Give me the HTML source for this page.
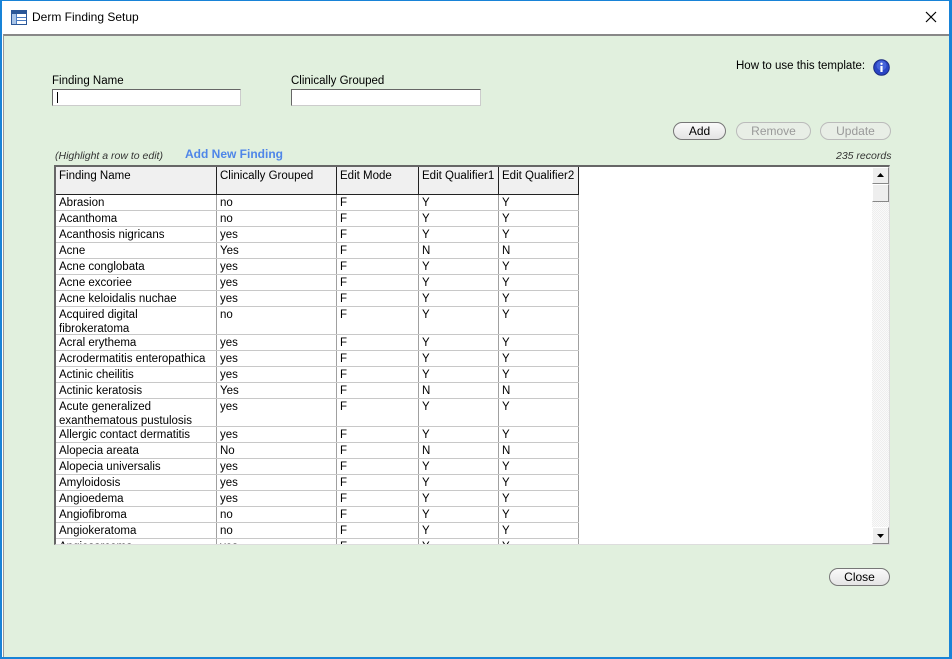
<!DOCTYPE html>
<html><head><meta charset="utf-8"><style>
*{margin:0;padding:0;box-sizing:border-box}
body{width:952px;height:659px;overflow:hidden;background:#fff;font-family:"Liberation Sans",Arial,sans-serif;font-size:11.5px;color:#000;position:relative}
.win{position:absolute;left:0;top:0;width:952px;height:659px;border:1px solid #1883d7;border-width:1px 3px 2px 2px;background:#fff}
.title{position:absolute;left:0;top:0;width:100%;height:33px;background:#fff}
.title span{position:absolute;left:30px;top:9px;font-size:12px;color:#000}
.content{position:absolute;left:1px;top:33px;right:0;bottom:0;background:#e1f0de;border-top:2px solid #888;border-left:1px solid #999}
.a{position:absolute;white-space:nowrap}
.inp{position:absolute;height:17px;background:#fff;border:1px solid #666;border-right-color:#ccc;border-bottom-color:#ccc}
.btn{position:absolute;height:18px;border-radius:9px;border:1px solid #777;background:linear-gradient(#fafafa,#e4e4e4);text-align:center;line-height:16px;font-size:12px}
.btn.dis{color:#999;border-color:#bbb;background:#e8eee6}
.grid{position:absolute;left:54px;top:165px;width:836px;height:380px;background:#fff;border:2px solid #666;border-right:1px solid #ddd;border-bottom:1px solid #ddd;overflow:hidden}
.row{position:absolute;left:0;height:16px;width:523px;border-bottom:1px solid #c8c8c8}
.c{position:absolute;top:0;height:100%;border-right:1px solid #a0a0a0;padding:1px 3px;line-height:14px;overflow:hidden;white-space:nowrap}
.hdr{background:#f0f0f0;border-bottom:1px solid #222}
.hdr .c{border-right:1px solid #222;padding-top:2px;background:#f0f0f0}
.sb{position:absolute;right:0;top:0;width:17px;height:100%;background:repeating-conic-gradient(#eee 0 25%,#fafafa 0 50%) 0 0/2px 2px}
.sbb{position:absolute;left:0;width:17px;height:17px;background:#eee;border:1px solid #888;border-top-color:#fff;border-left-color:#fff}
</style></head><body>
<div class="win">
 <div class="title">
  <svg style="position:absolute;left:9px;top:9px" width="16" height="15" viewBox="0 0 16 15"><rect x=".5" y=".5" width="15" height="14" fill="#fff" stroke="#2b5797"/><rect x="1" y="1" width="14" height="3" fill="#2b5797"/><path d="M5.5 4v10M1 7.5h14M1 10.5h14" stroke="#4a7bc0"/><rect x="1" y="4" width="4" height="10" fill="#a8c4e8"/></svg>
  <span>Derm Finding Setup</span>
  <svg style="position:absolute;right:12px;top:10px" width="12" height="12"><path d="M1 1L11 11M11 1L1 11" stroke="#000" stroke-width="1.2"/></svg>
 </div>
 <div class="content"></div>
</div>
<div class="a" style="left:52px;top:75px">Finding Name</div>
<div class="inp" style="left:52px;top:89px;width:189px"><div style="position:absolute;left:4px;top:2px;width:1px;height:11px;background:#000"></div></div>
<div class="a" style="left:291px;top:75px">Clinically Grouped</div>
<div class="inp" style="left:291px;top:89px;width:190px"></div>
<div class="a" style="left:736px;top:60px">How to use this template:</div>
<svg style="position:absolute;left:873px;top:59px" width="17" height="17" viewBox="0 0 17 17"><circle cx="8.5" cy="8.5" r="7.8" fill="#2a45c4" stroke="#1a2a80"/><circle cx="8.5" cy="6.5" r="5" fill="#5a7ae8" opacity=".6"/><rect x="7.4" y="7" width="2.2" height="6" fill="#fff"/><circle cx="8.5" cy="4.8" r="1.2" fill="#fff"/></svg>
<div class="btn" style="left:673px;top:122px;width:53px">Add</div>
<div class="btn dis" style="left:736px;top:122px;width:75px">Remove</div>
<div class="btn dis" style="left:820px;top:122px;width:71px">Update</div>
<div class="a" style="left:55px;top:150px;font-style:italic;color:#333;font-size:10.5px">(Highlight a row to edit)</div>
<div class="a" style="left:185px;top:147px;font-weight:bold;color:#4f86e8;font-size:12px">Add New Finding</div>
<div class="a" style="left:836px;top:150px;font-style:italic;color:#333;font-size:10.5px">235 records</div>
<div class="grid">
 <div class="row hdr" style="top:0;height:28px"><div class="c" style="left:0;width:161px">Finding Name</div><div class="c" style="left:161px;width:120px">Clinically Grouped</div><div class="c" style="left:281px;width:82px">Edit Mode</div><div class="c" style="left:363px;width:80px">Edit Qualifier1</div><div class="c" style="left:443px;width:80px">Edit Qualifier2</div></div>
 <div id="rows"></div>
 <div class="sb"><div class="sbb" style="top:0"><svg width="15" height="15"><path d="M4 9h7L7.5 5z" fill="#000"/></svg></div><div class="sbb" style="top:17px;height:18px"></div><div class="sbb" style="bottom:0"><svg width="15" height="15"><path d="M4 6h7L7.5 10z" fill="#000"/></svg></div></div>
</div>
<div class="btn" style="left:829px;top:568px;width:61px">Close</div>
<script>
var d=[["Abrasion","no","Y","Y"],["Acanthoma","no","Y","Y"],["Acanthosis nigricans","yes","Y","Y"],["Acne","Yes","N","N"],["Acne conglobata","yes","Y","Y"],["Acne excoriee","yes","Y","Y"],["Acne keloidalis nuchae","yes","Y","Y"],["Acquired digital<br>fibrokeratoma","no","Y","Y",1],["Acral erythema","yes","Y","Y"],["Acrodermatitis enteropathica","yes","Y","Y"],["Actinic cheilitis","yes","Y","Y"],["Actinic keratosis","Yes","N","N"],["Acute generalized<br>exanthematous pustulosis","yes","Y","Y",1],["Allergic contact dermatitis","yes","Y","Y"],["Alopecia areata","No","N","N"],["Alopecia universalis","yes","Y","Y"],["Amyloidosis","yes","Y","Y"],["Angioedema","yes","Y","Y"],["Angiofibroma","no","Y","Y"],["Angiokeratoma","no","Y","Y"],["Angiosarcoma","yes","Y","Y"]];
var y=28,h="";
d.forEach(function(r){var ht=r[4]?28:16;
h+='<div class="row" style="top:'+y+'px;height:'+ht+'px"><div class="c" style="left:0;width:161px">'+r[0]+'</div><div class="c" style="left:161px;width:120px">'+r[1]+'</div><div class="c" style="left:281px;width:82px">F</div><div class="c" style="left:363px;width:80px">'+r[2]+'</div><div class="c" style="left:443px;width:80px">'+r[3]+'</div></div>';y+=ht;});
document.getElementById("rows").innerHTML=h;
</script>
</body></html>
